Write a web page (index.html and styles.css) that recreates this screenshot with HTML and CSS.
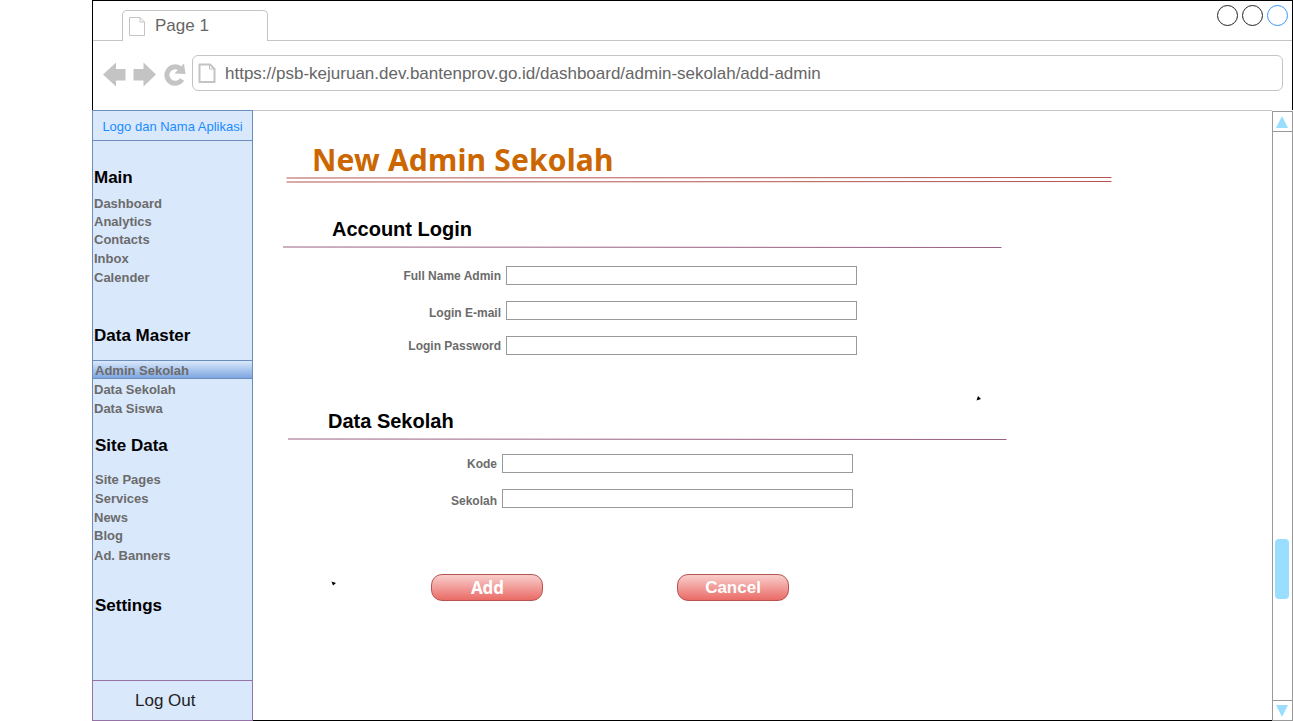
FILE: index.html
```html
<!DOCTYPE html>
<html lang="id">
<head>
<meta charset="utf-8">
<title>New Admin Sekolah</title>
<link rel="stylesheet" href="styles.css">
</head>
<body>
<div class="window">
  <header class="chrome">
    <div class="tabbar">
      <div class="tab-lead"></div>
      <div class="tab">
        <svg class="tab-icon" width="17" height="20" viewBox="0 0 17 20"><path d="M.5 1.500H11L15.500 6V19.500H.5ZM11 1.500V6H15.500" fill="none" stroke="#c4c4c4"/></svg>
        <span class="tab-name">Page 1</span>
      </div>
      <div class="tab-rest">
        <svg width="72" height="23" viewBox="0 0 72 23" fill="none"><circle cx="11.500" cy="11.500" r="10" stroke="#222"/><circle cx="36.500" cy="11.500" r="10" stroke="#222"/><circle cx="61.500" cy="11.500" r="10" stroke="#3399ff"/></svg>
      </div>
    </div>
    <div class="toolbar">
      <svg class="nav-icons" width="84" height="26" viewBox="0 0 84 26"><g fill="#c4c4c4"><path d="M0 13.500 13 1.500V8H22.500V19.500H13V25.500Z"/><path d="M53 13.500 40.500 1.500V8H30.500V19.500H40.500V25.500Z"/></g><path d="M79 18.500A8.200 8.200 0 1 1 77 7.500" fill="none" stroke="#c4c4c4" stroke-width="5"/><path d="M81 2.500 82.500 13 71.500 12.500Z" fill="#c4c4c4"/></svg>
      <div class="address">
        <svg width="18" height="20" viewBox="0 0 18 20"><path d="M1.500 1.500H12L16.500 6V19H1.500Z" fill="none" stroke="#c4c4c4" stroke-width="2"/><path d="M11.500 1.500V6H16.500" fill="none" stroke="#c4c4c4"/></svg>
        <span class="url">https://psb-kejuruan.dev.bantenprov.go.id/dashboard/admin-sekolah/add-admin</span>
      </div>
    </div>
  </header>
  <div class="body">
    <nav class="sidebar">
      <div class="brand">Logo dan Nama Aplikasi</div>
      <div class="menus">
        <h2>Main</h2>
        <ul class="list-main">
          <li>Dashboard</li><li class="short">Analytics</li><li class="short">Contacts</li><li>Inbox</li><li>Calender</li>
        </ul>
        <h2>Data Master</h2>
        <ul class="list-master">
          <li class="active">Admin Sekolah</li><li>Data Sekolah</li><li>Data Siswa</li>
        </ul>
        <h2 class="inset">Site Data</h2>
        <ul class="list-site">
          <li class="inset">Site Pages</li><li class="inset">Services</li><li>News</li><li class="short">Blog</li><li class="last">Ad. Banners</li>
        </ul>
        <h2 class="inset">Settings</h2>
      </div>
      <div class="logout">Log Out</div>
    </nav>
    <main class="content">
      <h1>New Admin Sekolah</h1>
      <svg class="title-rule" width="826" height="8" viewBox="0 0 826 8"><path d="M.5 2 825.500 1.500M.5 6 825.500 5.500" stroke="#b85450"/></svg>
      <section class="account">
        <h3>Account Login</h3>
        <svg class="rule" width="719" height="4" viewBox="0 0 719 4"><path d="M0 1 718.500 1.500" stroke="#996185"/></svg>
        <div class="field"><label for="name">Full Name Admin</label><input id="name"></div>
        <div class="field low"><label for="email">Login E-mail</label><input id="email"></div>
        <div class="field"><label for="pass">Login Password</label><input id="pass"></div>
      </section>
      <section class="school">
        <h3>Data Sekolah</h3>
        <svg class="rule" width="719" height="4" viewBox="0 0 719 4"><path d="M0 1 718.500 1.500" stroke="#996185"/></svg>
        <div class="field"><label for="code">Kode</label><input id="code"></div>
        <div class="field low"><label for="school">Sekolah</label><input id="school"></div>
      </section>
      <div class="actions">
        <button class="add">Add</button>
        <button>Cancel</button>
      </div>
      <svg class="mark mark-top" width="6" height="5" viewBox="0 0 6 5"><path d="M2 0 5 3 .5 4.500Z"/></svg>
      <svg class="mark mark-bottom" width="6" height="5" viewBox="0 0 6 5"><path d="M.5 .5 5 2 2 4.500Z"/></svg>
    </main>
    <aside class="scrollbar">
      <div class="arrow"><svg width="12" height="12" viewBox="0 0 12 12"><path d="M6 0 12 12H0Z" fill="#99ddff"/></svg></div>
      <div class="track"><div class="thumb"></div></div>
      <div class="arrow"><svg width="12" height="12" viewBox="0 0 12 12"><path d="M0 0H12L6 12Z" fill="#99ddff"/></svg></div>
    </aside>
  </div>
</div>
</body>
</html>
```
FILE: styles.css
```css
* { box-sizing: border-box; }
body { margin: 0; background: #fff; font-family: "Liberation Sans", Arial, sans-serif; overflow: hidden; }
svg { display: block; flex: none; }
h1, h2, h3, ul { margin: 0; padding: 0; }
ul { list-style: none; }
.window { width: 1201px; height: 721px; margin-left: 92px; display: flex; flex-direction: column; }
.chrome { height: 110px; border: 1px solid #000; border-bottom: 0; color: #666; font-size: 17px; }
.tabbar { display: flex; height: 40px; }
.tab-lead { width: 29px; border-bottom: 1px solid #c4c4c4; }
.tab { width: 146px; height: 31px; margin-top: 9px; border: 1px solid #c4c4c4; border-bottom: 0; border-radius: 5px 5px 0 0; display: flex; padding-left: 6px; }
.tab-icon { margin-top: 5px; }
.tab-name { margin-left: 9px; line-height: 30px; }
.tab-rest { flex: 1; border-bottom: 1px solid #c4c4c4; display: flex; justify-content: flex-end; padding: 3px 4px 0 0; }
.toolbar { display: flex; padding: 14px 9px 0 10px; }
.nav-icons { margin-top: 6px; }
.address { margin-left: 5px; flex: 1; height: 36px; border: 1px solid #c4c4c4; border-radius: 6px; display: flex; align-items: center; padding-left: 5px; }
.url { margin-left: 9px; white-space: nowrap; line-height: 34px; padding-top: 2px; }

.body { display: flex; height: 611px; }
.sidebar { width: 161px; background: #dae8fc; display: flex; flex-direction: column; }
.brand { height: 31px; border: 1px solid #6c8ebf; color: #1a8cff; font-size: 13px; line-height: 31px; text-align: center; white-space: nowrap; }
.menus { flex: 1; border: solid #6c8ebf; border-width: 0 1px; padding-top: 26px; }
.menus h2 { font-size: 17px; height: 20px; line-height: 22px; padding-left: 1px; }
.menus li { height: 19px; line-height: 19px; font-size: 13px; font-weight: bold; color: #6b6b6b; padding-left: 1px; }
.menus li.short { height: 18px; line-height: 18px; }
.menus .inset { padding-left: 2px; }
.list-main { padding: 7px 0 38px; }
.list-master { padding: 15px 0 17px; }
.menus li.active { border: solid #6c8ebf; border-width: 1px 0; line-height: 19px; background: linear-gradient(#dae8fc, #7ea6e0); padding-left: 2px; margin-bottom: 1px; }
.list-site { padding: 15px 0 30px; }
.menus li.last { margin-top: 1px; }
.logout { height: 41px; border: 1px solid #9673a6; font-size: 17px; color: #222; line-height: 40px; padding-left: 42px; }

.content { position: relative; flex: 1; border: solid #c4c4c4; border-width: 1px 0 0; border-bottom: 1px solid #000; }
h1 { margin: 32px 0 0 59px; height: 34px; font: bold 30px/34px "Noto Sans", "Open Sans", sans-serif; letter-spacing: .180px; color: #cc6600; white-space: nowrap; }
.title-rule { margin: -1px 0 0 33px; }
.account { padding: 33px 0 0 30px; }
h3 { font-size: 20px; line-height: 24px; height: 29px; }
.account h3 { padding-left: 49px; }
.field { display: flex; height: 19px; margin-bottom: 16px; }
.rule + .field { margin-top: 16px; }
.field label { width: 218px; text-align: right; font-size: 12px; font-weight: bold; color: #6b6b6b; line-height: 20px; }
.field.low label { line-height: 24px; }
.field input { width: 351px; height: 19px; margin-left: 5px; padding: 0 4px; border: 1px solid #999; border-radius: 0; background: #fff; outline: 0; }
.school { padding: 38px 0 0 34.500px; }
.school h3 { padding-left: 40.500px; }
.school .rule + .field { margin-top: 12px; }
.school .field label { width: 209.500px; }
.actions { display: flex; gap: 134px; padding: 50px 0 0 178px; }
.actions button { width: 112px; height: 27px; padding: 0; border: 1px solid #b85450; border-radius: 11px; background: linear-gradient(#f8cecc, #ea6b66); color: #fff; font: bold 17px/25px "Liberation Sans", sans-serif; }
.actions .add { font-family: "Open Sans", sans-serif; padding-left: 1px; }
.mark { position: absolute; }
.mark-top { left: 723px; top: 285px; }
.mark-bottom { left: 78px; top: 470px; }

.scrollbar { width: 21px; border: 1px solid #999; margin-top: 1px; display: flex; flex-direction: column; }
.arrow { height: 20px; display: flex; padding-left: 3px; align-items: center; }
.arrow:first-child { border-bottom: 1px solid #999; }
.arrow:last-child { border-top: 1px solid #999; }
.track { flex: 1; padding: 407px 2px 0; }
.thumb { width: 14px; height: 60px; border-radius: 4px; background: #99ddff; }
```
